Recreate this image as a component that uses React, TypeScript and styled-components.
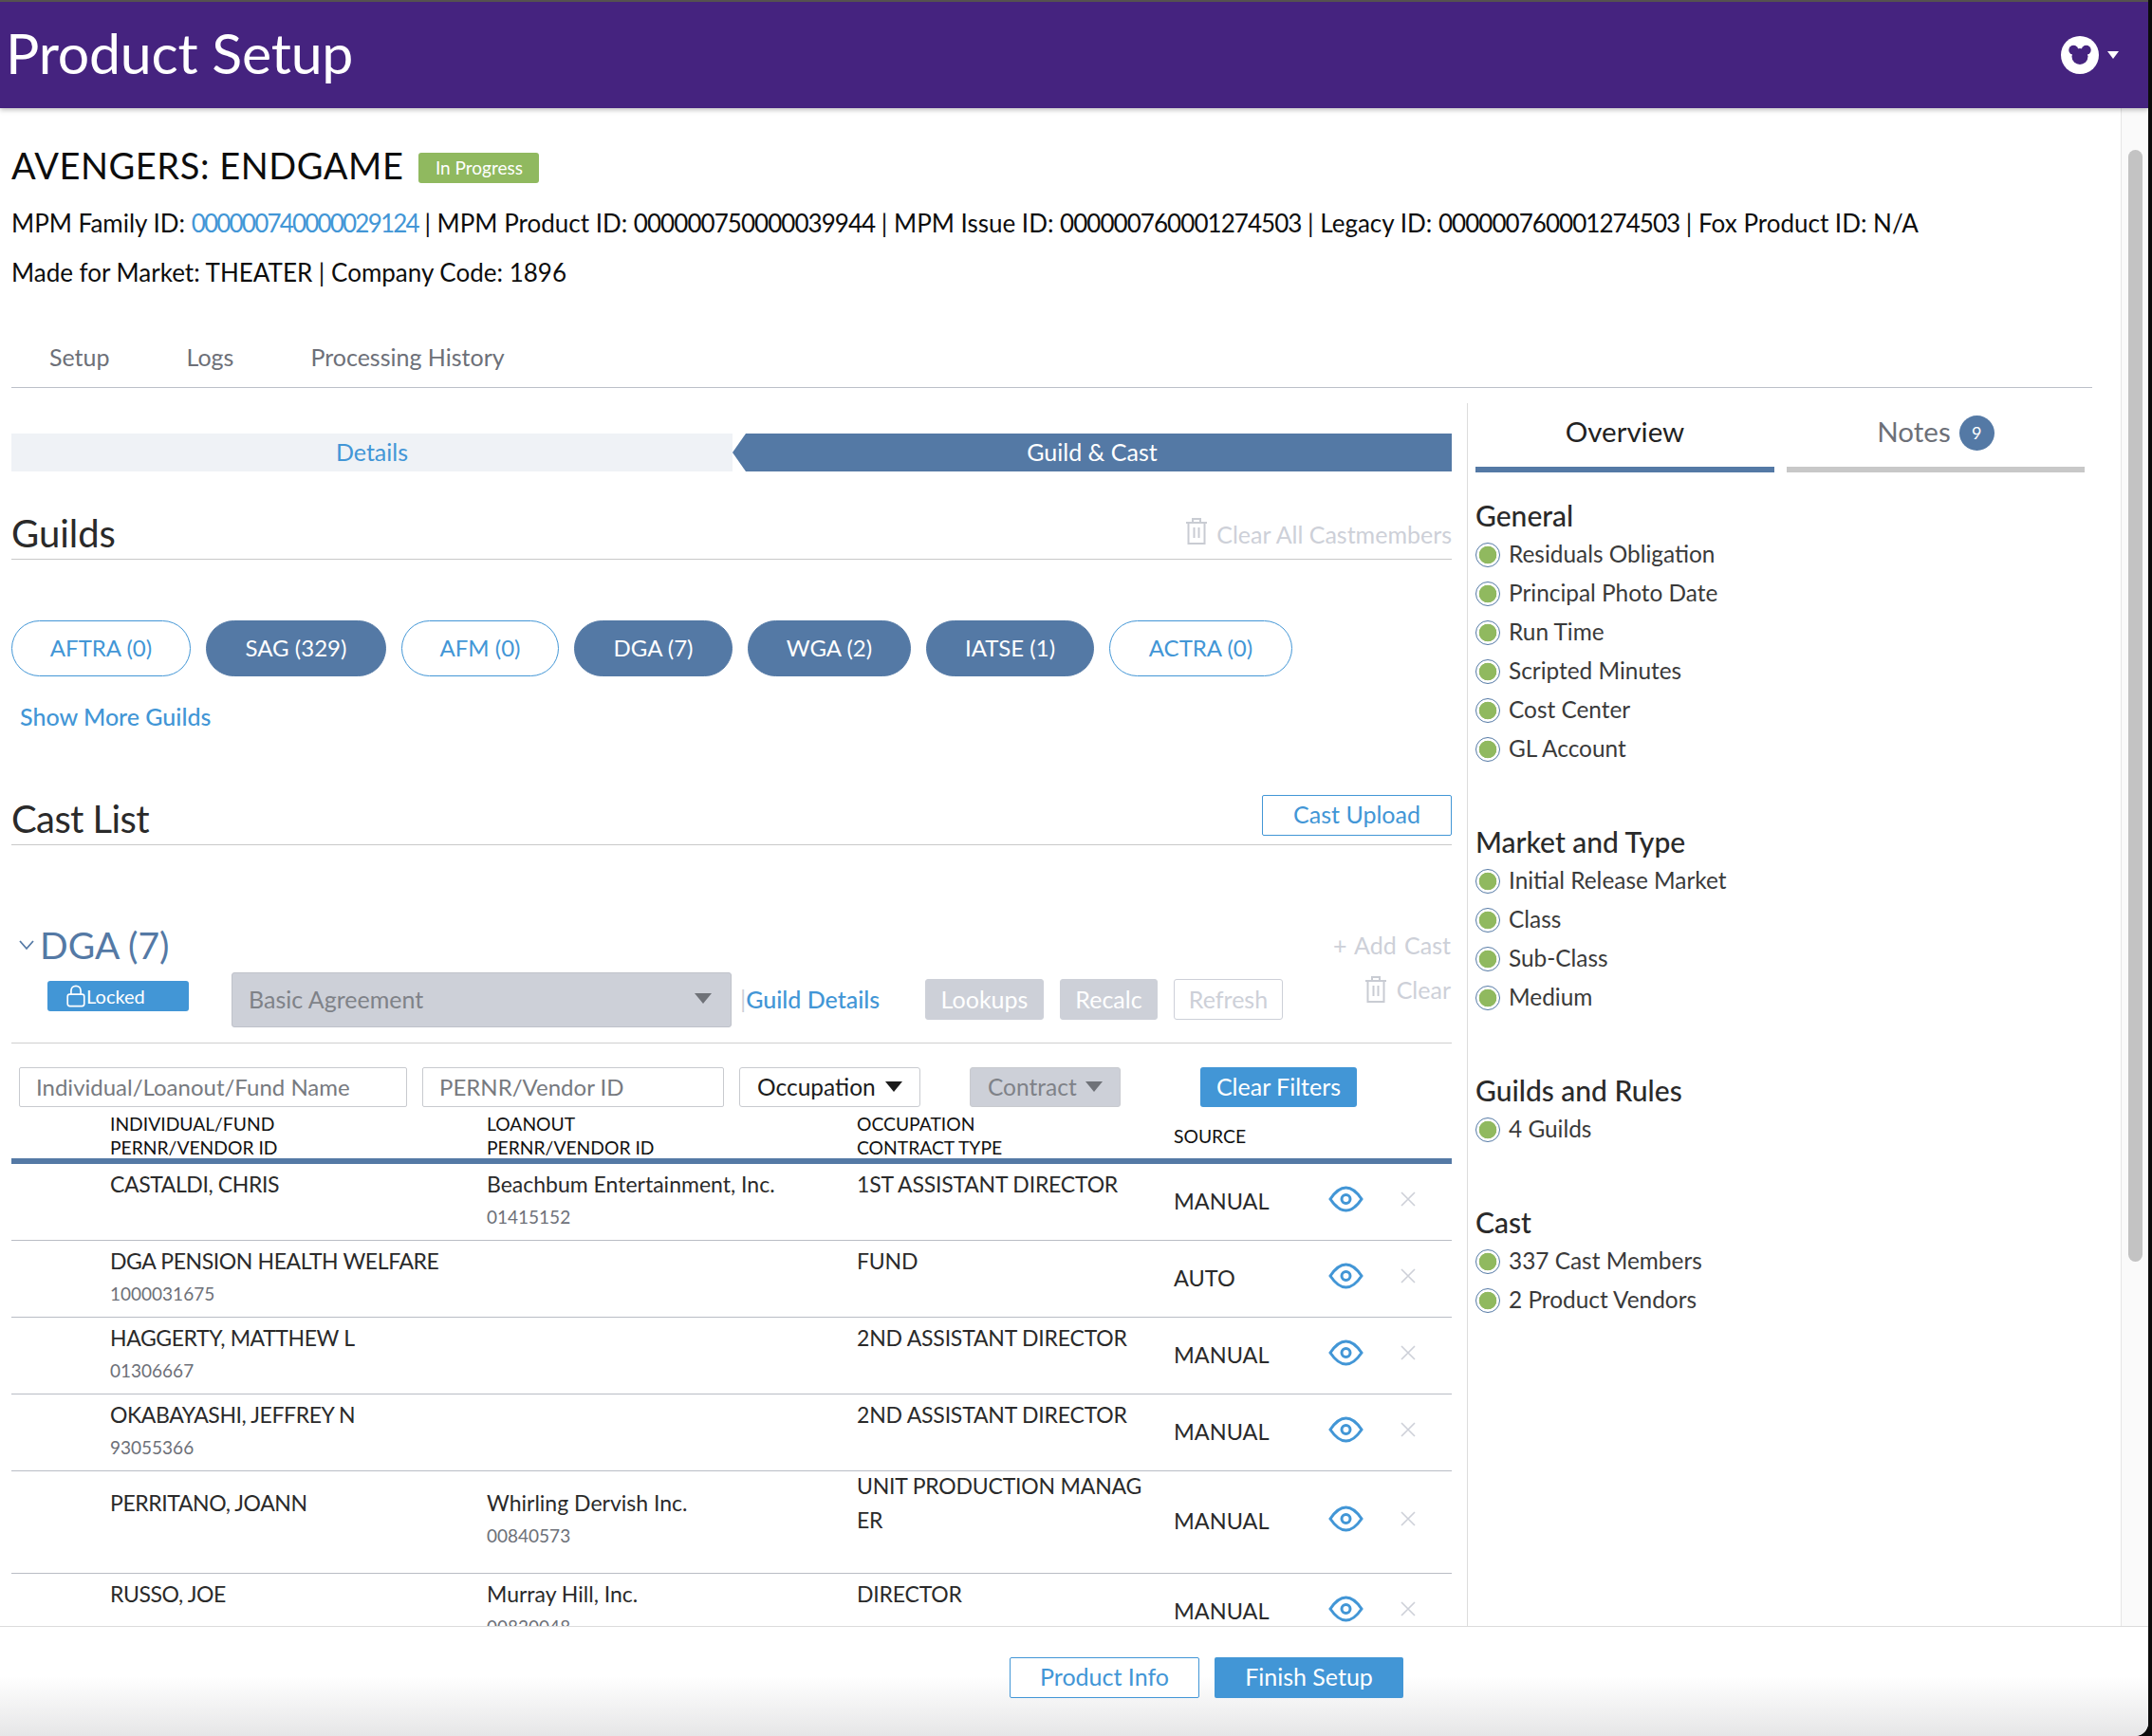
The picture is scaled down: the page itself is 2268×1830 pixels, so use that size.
import { FC } from 'react'
import styled, { createGlobalStyle } from 'styled-components'

const GlobalStyle = createGlobalStyle`
  html, body {
    margin: 0;
    padding: 0;
    background: #0c0c0c;
  }
  body {
    font-family: Lato, "Open Sans", "Liberation Sans", sans-serif;
    color: #2a2a2a;
  }
  * { box-sizing: border-box; }
`

const BLUE = '#4296d6'
const STEEL = '#5479a5'
const MUTED = '#cdd0d8'

const guilds = [
  { label: 'AFTRA (0)', width: 189, active: false },
  { label: 'SAG (329)', width: 190, active: true },
  { label: 'AFM (0)', width: 166, active: false },
  { label: 'DGA (7)', width: 167, active: true },
  { label: 'WGA (2)', width: 172, active: true },
  { label: 'IATSE (1)', width: 177, active: true },
  { label: 'ACTRA (0)', width: 193, active: false },
]

const cast = [
  { name: 'CASTALDI, CHRIS', id: '', loanout: 'Beachbum Entertainment, Inc.', loanoutId: '01415152', occupation: ['1ST ASSISTANT DIRECTOR'], source: 'MANUAL' },
  { name: 'DGA PENSION HEALTH WELFARE', id: '1000031675', loanout: '', loanoutId: '', occupation: ['FUND'], source: 'AUTO' },
  { name: 'HAGGERTY, MATTHEW L', id: '01306667', loanout: '', loanoutId: '', occupation: ['2ND ASSISTANT DIRECTOR'], source: 'MANUAL' },
  { name: 'OKABAYASHI, JEFFREY N', id: '93055366', loanout: '', loanoutId: '', occupation: ['2ND ASSISTANT DIRECTOR'], source: 'MANUAL' },
  { name: 'PERRITANO, JOANN', id: '', loanout: 'Whirling Dervish Inc.', loanoutId: '00840573', occupation: ['UNIT PRODUCTION MANAG', 'ER'], source: 'MANUAL' },
  { name: 'RUSSO, JOE', id: '', loanout: 'Murray Hill, Inc.', loanoutId: '00820048', occupation: ['DIRECTOR'], source: 'MANUAL' },
]

const overview = [
  { title: 'General', items: ['Residuals Obligation', 'Principal Photo Date', 'Run Time', 'Scripted Minutes', 'Cost Center', 'GL Account'] },
  { title: 'Market and Type', items: ['Initial Release Market', 'Class', 'Sub-Class', 'Medium'] },
  { title: 'Guilds and Rules', items: ['4 Guilds'] },
  { title: 'Cast', items: ['337 Cast Members', '2 Product Vendors'] },
]

const MickeyIcon: FC = () => (
  <svg width="40" height="40" viewBox="0 0 40 40">
    <circle cx="20" cy="20" r="20" fill="#fff" />
    <g fill="#45237f">
      <circle cx="20" cy="21.5" r="8.5" />
      <circle cx="13.3" cy="14.7" r="5" />
      <circle cx="26.7" cy="14.7" r="5" />
    </g>
  </svg>
)

const EyeIcon: FC = () => (
  <svg width="37" height="28" viewBox="0 0 37 28" fill="none" stroke={BLUE} strokeWidth="3">
    <path d="M2 14 C8 5 13 2 18.5 2 C24 2 29 5 35 14 C29 23 24 26 18.5 26 C13 26 8 23 2 14 Z" />
    <circle cx="18.5" cy="14" r="4.5" />
  </svg>
)

const CloseIcon: FC = () => (
  <svg width="16" height="16" viewBox="0 0 16 16" stroke={MUTED} strokeWidth="1.6">
    <path d="M1 1 L15 15 M15 1 L1 15" />
  </svg>
)

const TrashIcon: FC = () => (
  <svg width="22" height="28" viewBox="0 0 22 28" fill="none" stroke="#c9ccd3" strokeWidth="2">
    <path d="M0 5 H22 M7 5 V1 H15 V5 M2.5 5 V27 H19.5 V5 M8.5 10 V21 M13.5 10 V21" />
  </svg>
)

const LockIcon: FC = () => (
  <svg width="22" height="24" viewBox="0 0 22 26" fill="none" stroke="#fff" strokeWidth="1.8">
    <rect x="1.5" y="11" width="19" height="13.5" rx="2.5" />
    <path d="M5.5 11 V7 C5.5 3.5 8 1.5 11 1.5 C14 1.5 16.5 3.5 16.5 7 V11" />
  </svg>
)

const App: FC = () => (
  <Frame>
    <GlobalStyle />
    <TopBar>
      <AppTitle>Product Setup</AppTitle>
      <UserMenu>
        <MickeyIcon />
        <Caret />
      </UserMenu>
    </TopBar>

    <Body>
      <Content>
        <TitleRow>
          <ProductTitle>AVENGERS: ENDGAME</ProductTitle>
          <StatusBadge>In Progress</StatusBadge>
        </TitleRow>
        <MetaLine>
          MPM Family ID: <MetaLink>000000740000029124</MetaLink> | MPM Product ID: <IdValue>000000750000039944</IdValue> | MPM Issue ID: <IdValue>000000760001274503</IdValue> | Legacy ID: <IdValue>000000760001274503</IdValue> | Fox Product ID: N/A
        </MetaLine>
        <MetaLine>Made for Market: THEATER | Company Code: 1896</MetaLine>

        <PageTabs>
          <PageTab>Setup</PageTab>
          <PageTab>Logs</PageTab>
          <PageTab>Processing History</PageTab>
        </PageTabs>

        <Workspace>
          <MainColumn>
            <Stepper>
              <StepDone>Details</StepDone>
              <StepCurrent>Guild &amp; Cast</StepCurrent>
            </Stepper>

            <GuildsHead>
              <SectionTitle>Guilds</SectionTitle>
              <ClearAll>
                <TrashIcon />
                Clear All Castmembers
              </ClearAll>
            </GuildsHead>

            <PillRow>
              {guilds.map((g) => (
                <Pill key={g.label} $active={g.active} $width={g.width}>
                  {g.label}
                </Pill>
              ))}
            </PillRow>
            <ShowMore>Show More Guilds</ShowMore>

            <CastHead>
              <CastTitle>Cast List</CastTitle>
              <CastUpload $width={200}>Cast Upload</CastUpload>
            </CastHead>

            <GuildHeadRow>
              <GuildName>
                <svg width="18" height="12" viewBox="0 0 18 12" fill="none" stroke={STEEL} strokeWidth="1.8">
                  <path d="M2 2 L9 10 L16 2" />
                </svg>
                DGA (7)
              </GuildName>
              <GhostAction>+ Add Cast</GhostAction>
            </GuildHeadRow>

            <GuildToolbar>
              <LockedTag>
                <LockIcon />
                Locked
              </LockedTag>
              <AgreementSelect>
                Basic Agreement
                <SelectArrow $color="#6f7278" />
              </AgreementSelect>
              <GuildDetails>
                <Pipe>|</Pipe>Guild Details
              </GuildDetails>
              <ToolbarButton $filled $width={125}>Lookups</ToolbarButton>
              <ToolbarButton $filled $width={103}>Recalc</ToolbarButton>
              <ToolbarButton $width={115}>Refresh</ToolbarButton>
              <ClearAction>
                <TrashIcon />
                Clear
              </ClearAction>
            </GuildToolbar>

            <Filters>
              <FilterInput $width={409}>Individual/Loanout/Fund Name</FilterInput>
              <FilterInput $width={318}>PERNR/Vendor ID</FilterInput>
              <FilterDrop $width={191}>
                Occupation
                <SelectArrow $color="#1c1c1c" />
              </FilterDrop>
              <FilterDrop $width={159} $disabled>
                Contract
                <SelectArrow $color="#6f7278" />
              </FilterDrop>
              <ClearFilters>Clear Filters</ClearFilters>
            </Filters>

            <TableHead>
              <HeadCell>INDIVIDUAL/FUND<br />PERNR/VENDOR ID</HeadCell>
              <HeadCell>LOANOUT<br />PERNR/VENDOR ID</HeadCell>
              <HeadCell>OCCUPATION<br />CONTRACT TYPE</HeadCell>
              <HeadCell $center>SOURCE</HeadCell>
            </TableHead>

            {cast.map((c) => {
              const tall = c.occupation.length > 1
              return (
                <CastRow key={c.name} $tall={tall}>
                  <NameCell $tall={tall}>
                    {c.name}
                    {c.id && <SubId>{c.id}</SubId>}
                  </NameCell>
                  <LoanoutCell $tall={tall}>
                    {c.loanout}
                    {c.loanoutId && <SubId>{c.loanoutId}</SubId>}
                  </LoanoutCell>
                  <OccupationCell $tall={tall}>
                    {c.occupation.map((line) => (
                      <div key={line}>{line}</div>
                    ))}
                  </OccupationCell>
                  <SourceCell>{c.source}</SourceCell>
                  <IconCell><EyeIcon /></IconCell>
                  <IconCell><CloseIcon /></IconCell>
                </CastRow>
              )
            })}
          </MainColumn>

          <SidePanel>
            <SideTabs>
              <SideTab $active>Overview</SideTab>
              <SideTab>
                Notes <NotesCount>9</NotesCount>
              </SideTab>
            </SideTabs>
            {overview.map((section) => (
              <OverviewSection key={section.title}>
                <OverviewTitle>{section.title}</OverviewTitle>
                {section.items.map((item) => (
                  <OverviewItem key={item}>
                    <StatusDot />
                    <ItemLabel>{item}</ItemLabel>
                  </OverviewItem>
                ))}
              </OverviewSection>
            ))}
          </SidePanel>
        </Workspace>
      </Content>

      <ScrollTrack>
        <ScrollThumb />
      </ScrollTrack>
    </Body>

    <Footer>
      <OutlineButton $width={200}>Product Info</OutlineButton>
      <PrimaryButton>Finish Setup</PrimaryButton>
    </Footer>
  </Frame>
)

const Frame = styled.div`
  width: 2264px;
  height: 1830px;
  display: flex;
  flex-direction: column;
  overflow: hidden;
  background: #fff;
  border-bottom-right-radius: 14px;
`

const TopBar = styled.header`
  position: relative;
  z-index: 2;
  flex: 0 0 114px;
  display: flex;
  align-items: center;
  justify-content: space-between;
  padding: 0 31px 0 6px;
  background: #45237f;
  border-top: 2px solid #55524f;
  box-shadow: 0 2px 5px rgba(0, 0, 0, 0.25);
`

const AppTitle = styled.h1`
  margin: -6px 0 0;
  font-size: 59px;
  font-weight: 400;
  letter-spacing: -0.2px;
  color: #fff;
`

const UserMenu = styled.div`
  display: flex;
  align-items: center;
  gap: 9px;
  margin-top: -1px;
`

const Caret = styled.span`
  width: 0;
  height: 0;
  border-left: 6px solid transparent;
  border-right: 6px solid transparent;
  border-top: 8px solid #fff;
`

const Body = styled.div`
  flex: 1;
  min-height: 0;
  display: flex;
`

const Content = styled.main`
  flex: 1;
  min-width: 0;
  overflow: hidden;
  padding: 38px 30px 0 12px;
`

const TitleRow = styled.div`
  height: 44px;
  display: flex;
  align-items: center;
  gap: 16px;
  margin-bottom: 13px;
`

const ProductTitle = styled.div`
  font-size: 38px;
  color: #0d0d0d;
  letter-spacing: 0.55px;
`

const StatusBadge = styled.span`
  width: 127px;
  height: 32px;
  margin-top: 5px;
  display: flex;
  align-items: center;
  justify-content: center;
  padding-bottom: 1px;
  border-radius: 3px;
  background: #90b95f;
  color: #fff;
  font-size: 19px;
`

const MetaLine = styled.div`
  height: 52px;
  line-height: 52px;
  font-size: 26px;
  color: #0d0d0d;
  white-space: nowrap;
`

const IdValue = styled.span`
  letter-spacing: -0.95px;
`

const MetaLink = styled.span`
  color: ${BLUE};
  letter-spacing: -1.8px;
`

const PageTabs = styled.nav`
  margin-top: 44px;
  height: 52px;
  display: flex;
  gap: 81px;
  padding-left: 40px;
  border-bottom: 1px solid #bcc0c8;
`

const PageTab = styled.div`
  height: 38px;
  line-height: 38px;
  font-size: 25px;
  color: #6d7078;
`

const Workspace = styled.div`
  margin-top: 16px;
  display: flex;
`

const MainColumn = styled.section`
  flex: 0 0 1518px;
  height: 1289px;
  overflow: hidden;
  padding-top: 32px;
`

const Stepper = styled.div`
  height: 40px;
  display: flex;
  font-size: 25px;
`

const StepDone = styled.div`
  flex: 0 0 760px;
  display: flex;
  align-items: center;
  justify-content: center;
  padding-bottom: 2px;
  background: #eff2f6;
  color: ${BLUE};
`

const StepCurrent = styled.div`
  flex: 1;
  display: flex;
  align-items: center;
  justify-content: center;
  padding-bottom: 2px;
  background: ${STEEL};
  color: #fff;
  clip-path: polygon(14px 0, 100% 0, 100% 100%, 14px 100%, 0 50%);
`

const SectionHead = styled.div`
  height: 56px;
  display: flex;
  align-items: center;
  justify-content: space-between;
  border-bottom: 1px solid #c9c9c9;
`

const GuildsHead = styled(SectionHead)`
  margin-top: 37px;
`

const CastHead = styled(SectionHead)`
  margin-top: 65px;
`

const SectionTitle = styled.h2`
  margin: 0;
  font-size: 40px;
  font-weight: 400;
  line-height: 56px;
  color: #2a2a2a;
`

const CastTitle = styled(SectionTitle)`
  letter-spacing: -0.6px;
`

const ClearAll = styled.div`
  display: flex;
  align-items: center;
  gap: 10px;
  margin-top: 2px;
  font-size: 25px;
  color: ${MUTED};
  svg { margin-top: -6px; }
`

const PillRow = styled.div`
  margin-top: 64px;
  display: flex;
  gap: 16px;
`

const Pill = styled.div<{ $active: boolean; $width: number }>`
  width: ${(p) => p.$width}px;
  height: 59px;
  display: flex;
  align-items: center;
  justify-content: center;
  border-radius: 30px;
  font-size: 24px;
  padding-bottom: 3px;
  border: 1px solid ${(p) => (p.$active ? STEEL : BLUE)};
  background: ${(p) => (p.$active ? STEEL : '#fff')};
  color: ${(p) => (p.$active ? '#fff' : BLUE)};
`

const ShowMore = styled.div`
  margin: 27px 0 0 9px;
  height: 30px;
  line-height: 30px;
  font-size: 25px;
  font-weight: 500;
  color: ${BLUE};
`

const OutlineButton = styled.div<{ $width: number }>`
  width: ${(p) => p.$width}px;
  height: 43px;
  display: flex;
  align-items: center;
  justify-content: center;
  padding-bottom: 3px;
  border: 1px solid ${BLUE};
  border-radius: 2px;
  background: #fff;
  font-size: 25px;
  color: ${BLUE};
`

const CastUpload = styled(OutlineButton)`
  margin-top: -6px;
`

const GuildHeadRow = styled.div`
  margin-top: 79px;
  height: 52px;
  display: flex;
  align-items: center;
  justify-content: space-between;
`

const GuildName = styled.div`
  display: flex;
  align-items: center;
  gap: 5px;
  padding-left: 7px;
  font-size: 39px;
  color: ${STEEL};
`

const GhostAction = styled.div`
  font-size: 25px;
  word-spacing: 2px;
  color: ${MUTED};
  padding-right: 1px;
`

const GuildToolbar = styled.div`
  height: 78px;
  display: flex;
  align-items: center;
  border-bottom: 1px solid #cfcfcf;
  padding-bottom: 14px;
`

const LockedTag = styled.div`
  margin: 0 0 8px 38px;
  width: 149px;
  height: 32px;
  display: flex;
  align-items: center;
  padding-left: 19px;
  border-radius: 3px;
  background: ${BLUE};
  color: #fff;
  font-size: 20px;
`

const AgreementSelect = styled.div`
  margin-left: 45px;
  width: 527px;
  height: 58px;
  display: flex;
  align-items: center;
  justify-content: space-between;
  padding: 0 20px 2px 17px;
  background: ${MUTED};
  border: 1px solid #bfc2ca;
  border-radius: 3px;
  font-size: 25px;
  color: #7f8288;
`

const SelectArrow = styled.span<{ $color: string }>`
  width: 0;
  height: 0;
  border-left: 9px solid transparent;
  border-right: 9px solid transparent;
  border-top: 11px solid ${(p) => p.$color};
`

const GuildDetails = styled.div`
  margin-left: 9px;
  width: 195px;
  padding-bottom: 2px;
  font-size: 25px;
  font-weight: 500;
  color: ${BLUE};
`

const Pipe = styled.span`
  color: ${MUTED};
  font-weight: 400;
`

const ToolbarButton = styled.div<{ $filled?: boolean; $width: number }>`
  width: ${(p) => p.$width}px;
  height: 43px;
  margin-right: 17px;
  display: flex;
  align-items: center;
  justify-content: center;
  padding-bottom: 2px;
  border-radius: 3px;
  font-size: 25px;
  border: 1px solid ${MUTED};
  background: ${(p) => (p.$filled ? MUTED : '#fff')};
  color: ${(p) => (p.$filled ? '#fff' : MUTED)};
`

const ClearAction = styled(GhostAction)`
  margin-left: auto;
  margin-top: -22px;
  display: flex;
  align-items: center;
  gap: 11px;
`

const Filters = styled.div`
  margin-top: 25px;
  padding-left: 8px;
  height: 42px;
  display: flex;
  gap: 16px;
`

const FilterInput = styled.div<{ $width: number }>`
  width: ${(p) => p.$width}px;
  display: flex;
  align-items: center;
  padding: 0 17px 2px;
  border: 1px solid #c8cacf;
  border-radius: 2px;
  font-size: 24px;
  color: #777a80;
`

const FilterDrop = styled.div<{ $width: number; $disabled?: boolean }>`
  width: ${(p) => p.$width}px;
  margin-left: ${(p) => (p.$disabled ? '36px' : '0')};
  display: flex;
  align-items: center;
  justify-content: space-between;
  padding: 0 18px 2px;
  border: 1px solid #c8cacf;
  border-radius: 3px;
  font-size: 24.5px;
  background: ${(p) => (p.$disabled ? MUTED : '#fff')};
  color: ${(p) => (p.$disabled ? '#7f8288' : '#1c1c1c')};
`

const ClearFilters = styled.div`
  margin-left: 68px;
  width: 165px;
  display: flex;
  align-items: center;
  justify-content: center;
  padding-bottom: 2px;
  border-radius: 3px;
  background: ${BLUE};
  color: #fff;
  font-size: 25px;
`

const gridColumns = `
  display: grid;
  grid-template-columns: 104px 397px 390px 334px 163px 76px 1fr;
`

const TableHead = styled.div`
  ${gridColumns}
  height: 60px;
  border-bottom: 6px solid ${STEEL};
  padding-top: 5px;
`

const HeadCell = styled.div<{ $center?: boolean }>`
  font-size: 19.3px;
  line-height: 25px;
  color: #111;
  align-self: ${(p) => (p.$center ? 'center' : 'start')};
  &:first-child { grid-column: 2; }
`

const CastRow = styled.div<{ $tall: boolean }>`
  ${gridColumns}
  height: ${(p) => (p.$tall ? 108 : 81)}px;
  border-bottom: 1px solid #b9bdc5;
  font-size: 23px;
  color: #2a2a2a;
`

const LoanoutCell = styled.div<{ $tall: boolean }>`
  padding-top: ${(p) => (p.$tall ? 20 : 8)}px;
  line-height: 26px;
`

const NameCell = styled(LoanoutCell)`
  grid-column: 2;
  letter-spacing: -0.4px;
`

const SubId = styled.div`
  margin-top: 9px;
  font-size: 19px;
  letter-spacing: 0;
  color: #6d7078;
`

const OccupationCell = styled.div<{ $tall: boolean }>`
  padding-top: 8px;
  margin-top: ${(p) => (p.$tall ? -11 : 0)}px;
  line-height: ${(p) => (p.$tall ? 36 : 26)}px;
  letter-spacing: -0.2px;
  white-space: nowrap;
`

const SourceCell = styled.div`
  align-self: center;
  margin-bottom: 3px;
  font-size: 23.5px;
`

const IconCell = styled.div`
  align-self: center;
  display: flex;
  align-items: center;
  margin-bottom: 7px;
`

const SidePanel = styled.aside`
  flex: 1;
  min-width: 0;
  margin-left: 16px;
  padding-left: 8px;
  border-left: 1px solid #dcdcdc;
  height: 1289px;
`

const SideTabs = styled.div`
  display: flex;
  gap: 13px;
  margin-bottom: 26px;
`

const SideTab = styled.div<{ $active?: boolean }>`
  flex: 0 0 ${(p) => (p.$active ? 315 : 314)}px;
  height: 73px;
  display: flex;
  align-items: center;
  justify-content: center;
  gap: 9px;
  padding-bottom: 8px;
  font-size: 29.5px;
  border-bottom: 6px solid ${(p) => (p.$active ? STEEL : '#c8c8c8')};
  color: ${(p) => (p.$active ? '#222' : '#6d7078')};
`

const NotesCount = styled.span`
  width: 37px;
  height: 37px;
  margin-top: 3px;
  display: flex;
  align-items: center;
  justify-content: center;
  border-radius: 50%;
  background: ${STEEL};
  color: #fff;
  font-size: 18px;
`

const OverviewSection = styled.div`
  & + & { margin-top: 58px; }
`

const OverviewTitle = styled.div`
  height: 40px;
  line-height: 38px;
  font-size: 30px;
  font-weight: 500;
  color: #2a2a2a;
`

const OverviewItem = styled.div`
  height: 41px;
  display: flex;
  align-items: center;
  gap: 9px;
  font-size: 24.4px;
  color: #3a3a3a;
`

const ItemLabel = styled.span`
  margin-top: -3px;
`

const StatusDot = styled.span`
  width: 26px;
  height: 26px;
  border-radius: 50%;
  border: 1px solid ${STEEL};
  background: radial-gradient(circle, #90b95f 0, #90b95f 9px, #fff 9.6px);
`

const ScrollTrack = styled.div`
  flex: 0 0 29px;
  padding: 44px 6px 0 7px;
  background: #fafafa;
  border-left: 1px solid #e6e6e6;
`

const ScrollThumb = styled.div`
  height: 1172px;
  border-radius: 8px;
  background: #c3c3c3;
`

const Footer = styled.footer`
  flex: 0 0 116px;
  display: flex;
  justify-content: flex-start;
  gap: 16px;
  padding: 32px 0 0 1064px;
  border-top: 1px solid #dcdcdc;
  background: linear-gradient(#fff 0, #fff 45%, #e6e6e7 100%);
`

const PrimaryButton = styled.div`
  width: 199px;
  height: 43px;
  display: flex;
  align-items: center;
  justify-content: center;
  padding-bottom: 3px;
  border-radius: 2px;
  background: ${BLUE};
  color: #fff;
  font-size: 25px;
`

export default App
